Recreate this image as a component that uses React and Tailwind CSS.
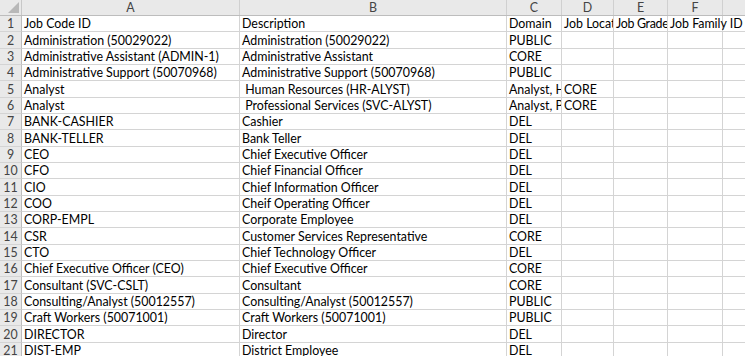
import React from "react";

const cols = [
  { key: "A", w: "w-[218px]" },
  { key: "B", w: "w-[267px]" },
  { key: "C", w: "w-[55px]" },
  { key: "D", w: "w-[52px]" },
  { key: "E", w: "w-[54px]" },
  { key: "F", w: "w-[55px]" },
  { key: "G", w: "w-[60px]" },
];

const rows = [
  ["Job Code ID", "Description", "Domain", "Job Location", "Job Grade", "Job Family ID"],
  ["Administration (50029022)", "Administration (50029022)", "PUBLIC"],
  ["Administrative Assistant (ADMIN-1)", "Administrative Assistant", "CORE"],
  ["Administrative Support (50070968)", "Administrative Support (50070968)", "PUBLIC"],
  ["Analyst", " Human Resources (HR-ALYST)", "Analyst, HR", "CORE"],
  ["Analyst", " Professional Services (SVC-ALYST)", "Analyst, Professional", "CORE"],
  ["BANK-CASHIER", "Cashier", "DEL"],
  ["BANK-TELLER", "Bank Teller", "DEL"],
  ["CEO", "Chief Executive Officer", "DEL"],
  ["CFO", "Chief Financial Officer", "DEL"],
  ["CIO", "Chief Information Officer", "DEL"],
  ["COO", "Cheif Operating Officer", "DEL"],
  ["CORP-EMPL", "Corporate Employee", "DEL"],
  ["CSR", "Customer Services Representative", "CORE"],
  ["CTO", "Chief Technology Officer", "DEL"],
  ["Chief Executive Officer (CEO)", "Chief Executive Officer", "CORE"],
  ["Consultant (SVC-CSLT)", "Consultant", "CORE"],
  ["Consulting/Analyst (50012557)", "Consulting/Analyst (50012557)", "PUBLIC"],
  ["Craft Workers (50071001)", "Craft Workers (50071001)", "PUBLIC"],
  ["DIRECTOR", "Director", "DEL"],
  ["DIST-EMP", "District Employee", "DEL"],
];

function Cell({ w, value, overflow, tight }) {
  return (
    <div
      className={`${w} shrink-0 h-full border-r border-b border-[#d4d4d4] flex items-center pl-[2px] pt-[2px] whitespace-pre ${
        overflow ? "overflow-visible relative z-10" : "overflow-hidden"
      } ${tight ? "tracking-[-0.3px]" : ""}`}
    >
      {value}
    </div>
  );
}

export default function App() {
  return (
    <div
      className="w-[745px] h-[356px] overflow-hidden bg-white text-[12.4px] text-black"
      style={{ fontFamily: "Lato, 'Liberation Sans', sans-serif" }}
    >
      <div className="flex h-[16px] bg-[#e9e9e9] border-b border-[#bdbdbd] text-[#444]">
        <div className="w-[22px] shrink-0 h-full border-r border-[#c8c8c8] relative">
          <svg className="absolute right-[2px] bottom-[2px]" width="11" height="11" viewBox="0 0 11 11">
            <polygon points="11,0 11,11 0,11" fill="#b8b8b8" />
          </svg>
        </div>
        {cols.map((c) => (
          <div
            key={c.key}
            className={`${c.w} shrink-0 h-full border-r border-[#d0d0d0] flex items-center justify-center pt-[1px]`}
          >
            {c.key === "G" ? "" : c.key}
          </div>
        ))}
      </div>
      {rows.map((r, i) => (
        <div key={i} className="flex h-[16.33px]">
          <div className="w-[22px] shrink-0 h-full bg-[#e9e9e9] border-r border-[#bdbdbd] border-b border-b-[#d4d4d4] flex items-center justify-center text-[#444] pt-[2px]">
            {i + 1}
          </div>
          {cols.map((c, j) => (
            <Cell
              key={c.key}
              w={c.w}
              value={r[j] || ""}
              overflow={i === 0 && j === 5}
              tight={i === 0 && j === 4}
            />
          ))}
        </div>
      ))}
    </div>
  );
}
